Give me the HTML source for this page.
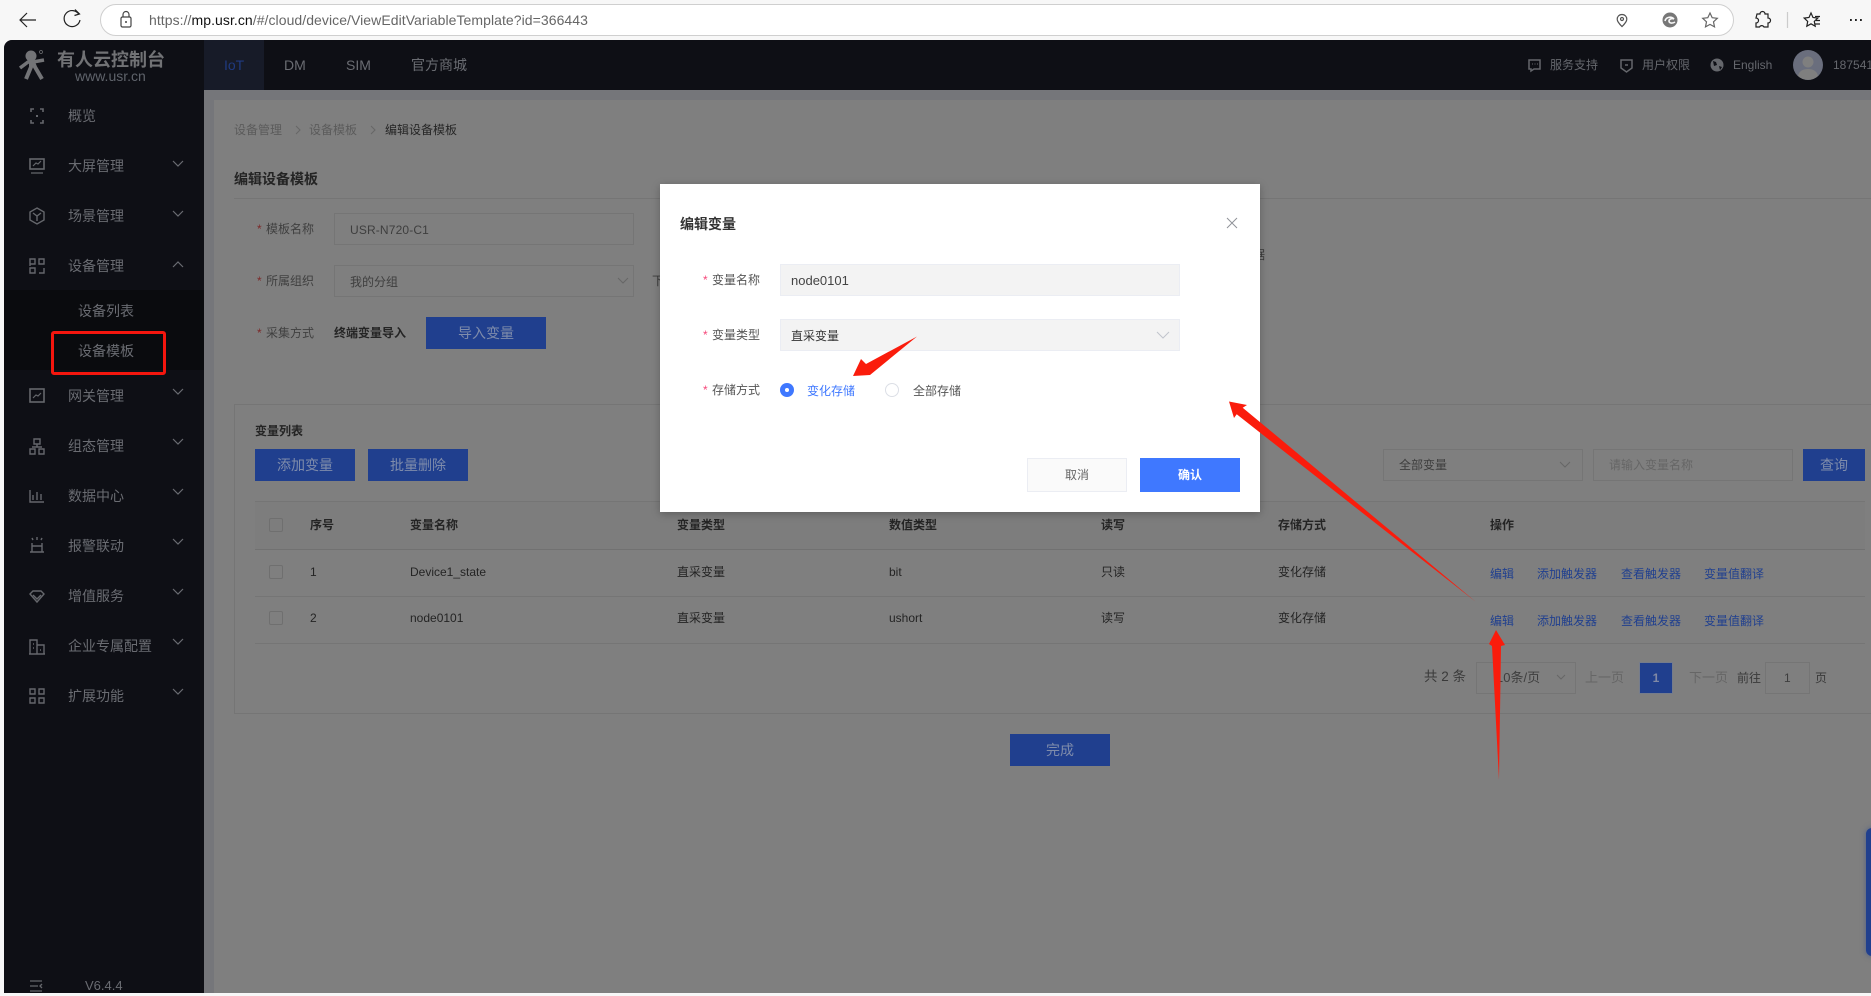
<!DOCTYPE html>
<html lang="zh-CN"><head><meta charset="utf-8"><title>编辑设备模板</title>
<style>
*{box-sizing:border-box}
html,body{margin:0;padding:0;width:1871px;height:993px;overflow:hidden;background:#f7f7f7;font-family:"Liberation Sans","Noto Sans CJK SC",sans-serif;font-size:12px}
.a{position:absolute}
.t{position:absolute;white-space:nowrap;line-height:20px;height:20px}
.m{color:#6a6c72;font-size:14px}
.d{color:#5b5b5b}
.h{color:#242424;font-weight:700}
.b{color:#242424}
.l{color:#21408f}
.s{color:#7c2a2a}
.btn{position:absolute;background:#203f8e;color:#7f8cab;text-align:center;font-size:14px;line-height:32px;height:32px}
.box{position:absolute;border:1px solid #757575}
.cb{position:absolute;width:14px;height:14px;border:1px solid #6f6f6f;border-radius:2px}
.ln{position:absolute;height:1px;background:#757575}
svg{position:absolute;overflow:visible}
.ic{fill:none;stroke:#65676c;stroke-width:1.6}
.ch{fill:none;stroke:#6a6c72;stroke-width:1.2}
</style></head><body>

<!-- browser toolbar -->
<div class="a" style="left:0;top:0;width:1871px;height:40px;background:#f7f7f7"></div>
<div class="a" style="left:100px;top:4px;width:1634px;height:32px;background:#fff;border:1px solid #cfcfcf;border-radius:16px"></div>
<svg style="left:0;top:0" width="1871" height="40" fill="none" stroke="#222" stroke-width="1.2">
<path d="M36 20H20M27 13l-7 7 7 7"/>
<path d="M79 14.500A8 8 0 1 0 80 20"/><path d="M75 9.500l4.500 4.500-5 1.500" />
<rect x="121" y="17" width="10" height="10" rx="1.500" stroke="#444"/><path d="M123 17v-2.500a3 3 0 0 1 6 0V17" stroke="#444"/><circle cx="126" cy="22" r="1" fill="#444" stroke="none"/>
<path d="M1622 14.500c-3.200 0-4.800 2.400-4.800 4.600 0 3 4.800 7.400 4.800 7.400s4.800-4.400 4.800-7.400c0-2.200-1.600-4.600-4.800-4.600z" stroke="#555"/><circle cx="1622" cy="19" r="1.500" stroke="#555"/>
<circle cx="1670" cy="20" r="7.500" fill="#777" stroke="none"/><path d="M1665 21c1-4 6-5 9-2-2-1-5 0-5 2s3 3 6 1" stroke="#f7f7f7" stroke-width="1.600"/>
<path d="M1710 13l2.200 4.700 5.100.6-3.800 3.500 1 5.100-4.500-2.500-4.500 2.500 1-5.100-3.800-3.500 5.100-.6z" stroke="#666"/>
<path d="M1760 15h3a2.500 2.500 0 0 1 5 0h3v4a2.500 2.500 0 0 1 0 5v4h-4a2.500 2.500 0 0 0-4.500 0H1759v-4a2.500 2.500 0 0 0 0-5z" transform="translate(-3 -1)"/>
<path d="M1787.500 12v16" stroke="#ccc"/>
<path d="M1811 13l2 4.500 4.800.6-3.500 3.300.9 4.800-4.200-2.400-4.200 2.400.9-4.800-3.500-3.300 4.800-.6z"/><path d="M1815 16.500h5M1816 20.500h4M1815 24h5"/>
<path d="M1850 20h1.800M1855 20h1.800M1860 20h1.800" stroke-width="2"/>
</svg>
<div class="t" style="left:149px;top:10px;font-size:14px;color:#666;letter-spacing:.06px">https://<span style="color:#111">mp.usr.cn</span>/#/cloud/device/ViewEditVariableTemplate?id=366443</div>

<!-- app frame -->
<div class="a" style="left:4px;top:40px;width:1867px;height:953px;background:#7f7f7f;border-top-left-radius:8px;overflow:hidden">
  <div class="a" style="left:200px;top:50px;width:10px;height:903px;background:#75767a"></div>
  <div class="a" style="left:200px;top:50px;width:1667px;height:10px;background:#75767a"></div>
  <div class="a" style="left:0;top:0;width:200px;height:953px;background:#0e0f15"></div>
  <div class="a" style="left:200px;top:0;width:1667px;height:50px;background:#0e0f15"></div>
  <div class="a" style="left:200px;top:0;width:60px;height:50px;background:#171b28"></div>
  <div class="a" style="left:0;top:250px;width:200px;height:80px;background:#0a0b0e"></div>
</div>

<!-- logo -->
<svg style="left:0;top:0" width="60" height="90" fill="none" stroke="#737477" stroke-width="4" stroke-linejoin="round">
<circle cx="31" cy="56" r="5.500" fill="#737477" stroke="none"/>
<path d="M20 68l8-6h5l11-2" stroke-width="3.500"/>
<path d="M31 62v5l-5 12M33 62l2 5 7 12" stroke-width="4"/>
<circle cx="41" cy="52" r="1.500" stroke-width=".7"/></svg>
<div class="t" style="left:57px;top:50px;font-size:18px;font-weight:700;color:#717275">有人云控制台</div>
<div class="t" style="left:75px;top:66px;font-size:14px;color:#5f636b">www.usr.cn</div>

<!-- sidebar -->
<svg style="left:0;top:0" width="204" height="993">
<g class="ic">
<path d="M31 112v-3h3M40 109h3v3M43 120v3h-3M34 123h-3v-3"/><rect x="36" y="115" width="2" height="2" fill="#65676c" stroke="none"/>
<rect x="30" y="159" width="14" height="10"/><path d="M33 166l3-3 2 1 3-3M31 173h12" stroke-width="1.200"/>
<path d="M37 208l7 4v8l-7 4-7-4v-8zM33 213l4 3 4-3M37 216v5" stroke-width="1.400"/>
<path d="M30 266v-7h5v5h-5zM39 259h5v5h-5zM30 268h5v5h-5zM44 268v5h-5" stroke-width="1.400"/>
<rect x="30" y="389" width="14" height="13"/><path d="M33 398l3-3 2 1 3-3" stroke-width="1.200"/>
<path d="M34 439h6v5h-6zM30 449h5v5h-5zM39 449h5v5h-5zM37 444v3M32 447h10" stroke-width="1.400"/>
<path d="M30 490v12h14M33 500v-5M37 500v-8M41 500v-6" stroke-width="1.400"/>
<path d="M32 552h10v-6H32zM30 552h14M32 546v-3M37 540v-3M42 546v-3M33 540l-1-2M41 540l1-2" stroke-width="1.400"/>
<path d="M30 594l3-3h8l3 3-7 8zM33 595l4 4 4-4" stroke-width="1.400"/>
<path d="M30 654v-14h7v14M37 645h7v9M29 654h16M33 644h1M33 648h1M40 650h1" stroke-width="1.400"/>
<path d="M30 689h5v5h-5zM39 689h5v5h-5zM30 698h5v5h-5zM39 698h5v5h-5z" stroke-width="1.400"/>
<path d="M30 981h12M30 986h8M30 991h12M42 984l-2 2 2 2" stroke-width="1.300"/>
</g>
<g class="ch">
<path d="M173 161l5 5 5-5M173 211l5 5 5-5M173 267l5-5 5 5M173 389l5 5 5-5M173 439l5 5 5-5M173 489l5 5 5-5M173 539l5 5 5-5M173 589l5 5 5-5M173 639l5 5 5-5M173 689l5 5 5-5"/>
</g></svg>
<div class="t m" style="left:68px;top:106px">概览</div>
<div class="t m" style="left:68px;top:156px">大屏管理</div>
<div class="t m" style="left:68px;top:206px">场景管理</div>
<div class="t m" style="left:68px;top:256px">设备管理</div>
<div class="t m" style="left:78px;top:301px">设备列表</div>
<div class="t m" style="left:78px;top:341px">设备模板</div>
<div class="t m" style="left:68px;top:386px">网关管理</div>
<div class="t m" style="left:68px;top:436px">组态管理</div>
<div class="t m" style="left:68px;top:486px">数据中心</div>
<div class="t m" style="left:68px;top:536px">报警联动</div>
<div class="t m" style="left:68px;top:586px">增值服务</div>
<div class="t m" style="left:68px;top:636px">企业专属配置</div>
<div class="t m" style="left:68px;top:686px">扩展功能</div>
<div class="t m" style="left:85px;top:976px;font-size:13px">V6.4.4</div>
<div class="a" style="left:51px;top:331px;width:115px;height:44px;border:3px solid #f4160e;border-radius:3px"></div>

<!-- top nav -->
<div class="t" style="left:224px;top:55px;font-size:14px;color:#1f3a80">IoT</div>
<div class="t m" style="left:284px;top:55px">DM</div>
<div class="t m" style="left:346px;top:55px">SIM</div>
<div class="t m" style="left:411px;top:55px">官方商城</div>
<svg style="left:0;top:0" width="1871" height="100">
<path d="M1529 60h11v9h-6l-3 2v-2h-2z" fill="none" stroke="#65676c" stroke-width="1.500"/><path d="M1532 64h1M1534.500 64h1M1537 64h1" stroke="#65676c"/>
<path d="M1621 60h11v8l-5.500 4-5.500-4z" fill="none" stroke="#65676c" stroke-width="1.500"/><path d="M1625 65h3" stroke="#65676c" stroke-width="1.500"/>
<circle cx="1717" cy="65" r="6.500" fill="#65676c"/><path d="M1713 61l3 1 1 3-3 1zM1719 66l3 1-2 3z" fill="#0e0f15"/>
<ellipse cx="1808" cy="65" rx="15" ry="15" fill="#6a6e7d"/><circle cx="1808" cy="62" r="5.500" fill="#7f7f7f"/><path d="M1798 76c1-5 5-7 10-7s9 2 10 7a15 15 0 0 1-20 0z" fill="#7f7f7f"/>
</svg>
<div class="t" style="left:1550px;top:55px;color:#66686e">服务支持</div>
<div class="t" style="left:1642px;top:55px;color:#66686e">用户权限</div>
<div class="t" style="left:1733px;top:55px;color:#66686e">English</div>
<div class="t" style="left:1833px;top:55px;color:#66686e">187541</div>

<!-- page behind -->
<div class="t d" style="left:234px;top:120px">设备管理</div>
<div class="t d" style="left:309px;top:120px">设备模板</div>
<div class="t h" style="left:385px;top:120px;font-weight:400;color:#262626">编辑设备模板</div>
<svg style="left:0;top:0" width="400" height="140"><path d="M296 126l4 4-4 4M371 126l4 4-4 4" fill="none" stroke="#666" stroke-width="1"/></svg>
<div class="t h" style="left:234px;top:169px;font-size:14px">编辑设备模板</div>
<div class="ln" style="left:234px;top:198px;width:1637px"></div>

<div class="t s" style="left:257px;top:219px">*</div>
<div class="t d" style="left:266px;top:219px;color:#404040">模板名称</div>
<div class="box" style="left:334px;top:213px;width:300px;height:32px"></div>
<div class="t d" style="left:350px;top:220px;color:#3e3e3e;letter-spacing:.15px">USR-N720-C1</div>
<div class="t s" style="left:257px;top:271px">*</div>
<div class="t d" style="left:266px;top:271px;color:#404040">所属组织</div>
<div class="box" style="left:334px;top:265px;width:300px;height:32px"></div>
<div class="t d" style="left:350px;top:272px;color:#3e3e3e">我的分组</div>
<svg style="left:0;top:0" width="700" height="300"><path d="M618 278l5 5 5-5" fill="none" stroke="#666"/></svg>
<div class="t d" style="left:652px;top:271px;color:#3a3a3a">下</div>
<div class="t s" style="left:257px;top:323px">*</div>
<div class="t d" style="left:266px;top:323px;color:#404040">采集方式</div>
<div class="t h" style="left:334px;top:323px">终端变量导入</div>
<div class="btn" style="left:426px;top:317px;width:120px">导入变量</div>
<div class="t d" style="left:1241px;top:245px;color:#3a3a3a">数据</div>

<div class="box" style="left:234px;top:404px;width:1650px;height:310px"></div>
<div class="t h" style="left:255px;top:421px">变量列表</div>
<div class="btn" style="left:255px;top:449px;width:100px">添加变量</div>
<div class="btn" style="left:368px;top:449px;width:100px">批量删除</div>

<div class="box" style="left:1383px;top:449px;width:200px;height:32px"></div>
<div class="t" style="left:1399px;top:455px;color:#3e3e3e">全部变量</div>
<svg style="left:0;top:0" width="1871" height="700"><path d="M1560 462l5 5 5-5M1557 675l4 4 4-4" fill="none" stroke="#666"/></svg>
<div class="box" style="left:1593px;top:449px;width:200px;height:32px"></div>
<div class="t" style="left:1609px;top:455px;color:#666">请输入变量名称</div>
<div class="btn" style="left:1803px;top:449px;width:62px">查询</div>

<div class="a" style="left:255px;top:501px;width:1610px;height:48px;background:#7d7d7d"></div>
<div class="ln" style="left:255px;top:501px;width:1610px"></div>
<div class="ln" style="left:255px;top:549px;width:1610px;background:#717171"></div>
<div class="ln" style="left:255px;top:596px;width:1610px"></div>
<div class="ln" style="left:255px;top:643px;width:1610px"></div>

<div class="cb" style="left:269px;top:518px"></div>
<div class="cb" style="left:269px;top:565px"></div>
<div class="cb" style="left:269px;top:611px"></div>
<div class="t h" style="left:310px;top:515px">序号</div>
<div class="t h" style="left:410px;top:515px">变量名称</div>
<div class="t h" style="left:677px;top:515px">变量类型</div>
<div class="t h" style="left:889px;top:515px">数值类型</div>
<div class="t h" style="left:1101px;top:515px">读写</div>
<div class="t h" style="left:1278px;top:515px">存储方式</div>
<div class="t h" style="left:1490px;top:515px">操作</div>

<div class="t b" style="left:310px;top:562px">1</div>
<div class="t b" style="left:410px;top:562px">Device1_state</div>
<div class="t b" style="left:677px;top:562px">直采变量</div>
<div class="t b" style="left:889px;top:562px">bit</div>
<div class="t b" style="left:1101px;top:562px">只读</div>
<div class="t b" style="left:1278px;top:562px">变化存储</div>
<div class="t l" style="left:1490px;top:564px">编辑</div>
<div class="t l" style="left:1537px;top:564px">添加触发器</div>
<div class="t l" style="left:1621px;top:564px">查看触发器</div>
<div class="t l" style="left:1704px;top:564px">变量值翻译</div>

<div class="t b" style="left:310px;top:608px">2</div>
<div class="t b" style="left:410px;top:608px">node0101</div>
<div class="t b" style="left:677px;top:608px">直采变量</div>
<div class="t b" style="left:889px;top:608px">ushort</div>
<div class="t b" style="left:1101px;top:608px">读写</div>
<div class="t b" style="left:1278px;top:608px">变化存储</div>
<div class="t l" style="left:1490px;top:611px">编辑</div>
<div class="t l" style="left:1537px;top:611px">添加触发器</div>
<div class="t l" style="left:1621px;top:611px">查看触发器</div>
<div class="t l" style="left:1704px;top:611px">变量值翻译</div>

<div class="t" style="left:1424px;top:667px;font-size:13.500px;color:#3a3a3a">共 2 条</div>
<div class="box" style="left:1476px;top:662px;width:100px;height:32px"></div>
<div class="t" style="left:1496px;top:668px;color:#3e3e3e;font-size:13px">10条/页</div>
<div class="t" style="left:1585px;top:668px;font-size:13px;color:#666">上一页</div>
<div class="a" style="left:1639px;top:662px;width:34px;height:32px;background:#203f8e;border:1px solid #757c8c;color:#8089a5;text-align:center;line-height:30px;font-weight:700">1</div>
<div class="t" style="left:1689px;top:668px;font-size:13px;color:#666">下一页</div>
<div class="t" style="left:1737px;top:668px;color:#3a3a3a">前往</div>
<div class="box" style="left:1765px;top:662px;width:45px;height:32px"></div>
<div class="t" style="left:1784px;top:668px;color:#3e3e3e">1</div>
<div class="t" style="left:1815px;top:668px;color:#3a3a3a">页</div>

<div class="btn" style="left:1010px;top:734px;width:100px">完成</div>
<div class="a" style="left:1866px;top:828px;width:12px;height:128px;background:#203f8e;border-radius:8px;box-shadow:0 0 6px rgba(32,63,142,.5)"></div>

<!-- modal -->
<div class="a" style="left:660px;top:184px;width:600px;height:328px;background:#fff;box-shadow:0 2px 8px rgba(0,0,0,.25)"></div>
<div class="t" style="left:680px;top:214px;font-size:14px;font-weight:700;color:#333">编辑变量</div>
<svg style="left:0;top:0" width="1300" height="400"><path d="M1227 218l10 10M1237 218l-10 10" stroke="#909399" stroke-width="1" fill="none"/></svg>
<div class="t" style="left:703px;top:270px;color:#f5477a">*</div>
<div class="t" style="left:712px;top:270px;color:#555">变量名称</div>
<div class="a" style="left:780px;top:264px;width:400px;height:32px;background:#f3f3f3;border:1px solid #ebedf3;color:#444;font-size:13px;line-height:32px;padding-left:10px">node0101</div>
<div class="t" style="left:703px;top:325px;color:#f5477a">*</div>
<div class="t" style="left:712px;top:325px;color:#555">变量类型</div>
<div class="a" style="left:780px;top:319px;width:400px;height:32px;background:#f3f3f3;border:1px solid #ebedf3;color:#333;font-size:12px;line-height:32px;padding-left:10px">直采变量</div>
<svg style="left:0;top:0" width="1300" height="400"><path d="M1157 332l6 6 6-6" stroke="#c0c4cc" fill="none"/></svg>
<div class="t" style="left:703px;top:380px;color:#f5477a">*</div>
<div class="t" style="left:712px;top:380px;color:#555">存储方式</div>
<div class="a" style="left:780px;top:383px;width:14px;height:14px;border-radius:50%;background:#3f78ff"></div>
<div class="a" style="left:785px;top:388px;width:4px;height:4px;border-radius:50%;background:#fff"></div>
<div class="t" style="left:807px;top:381px;color:#3f78ff">变化存储</div>
<div class="a" style="left:885px;top:383px;width:14px;height:14px;border-radius:50%;background:#fff;border:1px solid #dcdfe6"></div>
<div class="t" style="left:913px;top:381px;color:#555">全部存储</div>
<div class="a" style="left:1027px;top:458px;width:100px;height:34px;background:#fafafa;border:1px solid #ebedf3;color:#666;text-align:center;line-height:33px">取消</div>
<div class="a" style="left:1140px;top:458px;width:100px;height:34px;background:#3f78ff;color:#fff;text-align:center;line-height:35px;font-weight:700">确认</div>

<!-- red arrow annotations -->
<svg style="left:0;top:0" width="1871" height="993" fill="#fa1c0c">
<path d="M917 336.500 870 375 853 376 861 359 866 364z"/>
<path d="M1475.700 601.700 1236.700 414.300 1234 418 1229 401.500 1247 405 1242.700 407.700z"/>
<path d="M1499 780 1492 646 1489 644 1496 630 1505 645 1501 646z"/>
</svg>
</body></html>
